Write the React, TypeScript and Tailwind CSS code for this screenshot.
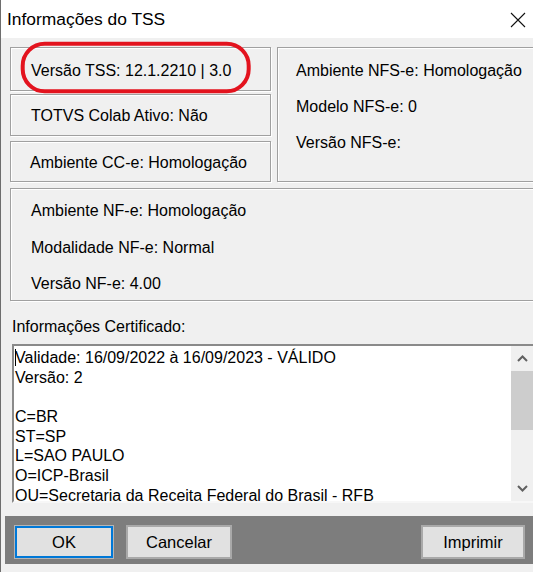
const panel = "border border-[#a0a0a0] shadow-[inset_1px_1px_0_#ffffff,1px_1px_0_#ffffff]";

const certLines = [
  "Validade: 16/09/2022 à 16/09/2023 - VÁLIDO",
  "Versão: 2",
  "",
  "C=BR",
  "ST=SP",
  "L=SAO PAULO",
  "O=ICP-Brasil",
  "OU=Secretaria da Receita Federal do Brasil - RFB",
];

export default function App() {
  return (
    <div className="relative w-[533px] h-[572px] overflow-hidden bg-[#f0f0f0] border-l border-[#6e6e6e] font-['Liberation_Sans',Arial,sans-serif] text-[16px] leading-[20px] text-black">

      {/* TITLE BAR */}
      <div className="h-[38px] bg-white flex items-center justify-between pl-[6px] pr-[7px]">
        <span className="text-[17.4px]">Informações do TSS</span>
        <svg width="16" height="16" viewBox="0 0 16 16" className="mt-[2px]">
          <path d="M1 1L15 15M15 1L1 15" stroke="#111" strokeWidth="1.1" fill="none" />
        </svg>
      </div>

      {/* TOP PANELS */}
      <div className="pl-[9px] pt-[9px]">
        <div className="flex gap-[6px] w-[560px]">
          <div className="flex flex-col w-[261px] shrink-0">
            <div className={`${panel} h-[44px] flex items-center pl-[20px] pt-[4px]`}>
              Versão TSS: 12.1.2210 | 3.0
            </div>
            <div className={`${panel} mt-[3px] h-[42px] flex items-center pl-[20px] pt-[1px]`}>
              TOTVS Colab Ativo: Não
            </div>
            <div className={`${panel} mt-[5px] h-[41px] flex items-center pl-[19px] pt-[3px]`}>
              Ambiente CC-e: Homologação
            </div>
          </div>
          <div className={`${panel} w-[290px] h-[135px] shrink-0 flex flex-col gap-[16px] pl-[18px] pt-[13px]`}>
            <span>Ambiente NFS-e: Homologação</span>
            <span>Modelo NFS-e: 0</span>
            <span>Versão NFS-e:</span>
          </div>
        </div>

        {/* NF-e PANEL */}
        <div className={`${panel} mt-[6px] w-[560px] h-[113px] flex flex-col gap-[16.5px] pl-[20px] pt-[12px]`}>
          <span>Ambiente NF-e: Homologação</span>
          <span>Modalidade NF-e: Normal</span>
          <span>Versão NF-e: 4.00</span>
        </div>
      </div>

      {/* CERTIFICADO */}
      <div className="ml-[11px] mt-[16px]">Informações Certificado:</div>
      <div className="ml-[11px] mt-[7px] w-[523px] h-[159px] flex bg-white border-2 border-t-[#8a8a8a] border-l-[#8a8a8a] border-b-[#f7f7f7] border-r-[#f7f7f7]">
        <div className="relative flex-1 flex flex-col pl-[1px] pt-[2px] whitespace-pre leading-[19.7px]">
          <span className="absolute left-[1px] top-[3px] w-px h-[17px] bg-black" />
          {certLines.map((l, i) => (
            <span key={i} className="h-[19.7px] shrink-0">{l}</span>
          ))}
        </div>
        <div className="w-[22px] flex flex-col bg-[#f0f0f0]">
          <div className="h-[25px] flex items-center justify-center">
            <svg width="11" height="7" viewBox="0 0 11 7">
              <path d="M1 6L5.5 1.5L10 6" stroke="#606060" strokeWidth="2" fill="none" />
            </svg>
          </div>
          <div className="h-[59px] bg-[#cdcdcd]" />
          <div className="flex-1" />
          <div className="h-[25px] flex items-center justify-center">
            <svg width="11" height="7" viewBox="0 0 11 7">
              <path d="M1 1L5.5 5.5L10 1" stroke="#606060" strokeWidth="2" fill="none" />
            </svg>
          </div>
        </div>
      </div>

      {/* BUTTON BAR */}
      <div className="ml-[4px] mt-[13px] w-[528px] h-[48px] bg-[#7d7d7d] flex items-start pt-[9px] pl-[9px] pr-[8px]">
        <button className="w-[100px] h-[34px] bg-[#e1e1e1] border border-[#b5b5b5] shadow-[inset_0_0_0_2px_#0078d7] text-[16.5px]">
          OK
        </button>
        <button className="ml-[12px] w-[106px] h-[34px] bg-[#e1e1e1] border-2 border-[#a9a9a9] text-[16.5px]">
          Cancelar
        </button>
        <button className="ml-auto w-[104px] h-[34px] bg-[#e1e1e1] border-2 border-[#a9a9a9] text-[16.5px]">
          Imprimir
        </button>
      </div>

      {/* RED ANNOTATION */}
      <svg className="absolute left-[18px] top-[40px]" width="236" height="56" viewBox="0 0 236 56">
        <rect x="3.7" y="3.7" width="226" height="47.6" rx="22" fill="none" stroke="#e3131e" strokeWidth="4" />
      </svg>
    </div>
  );
}
